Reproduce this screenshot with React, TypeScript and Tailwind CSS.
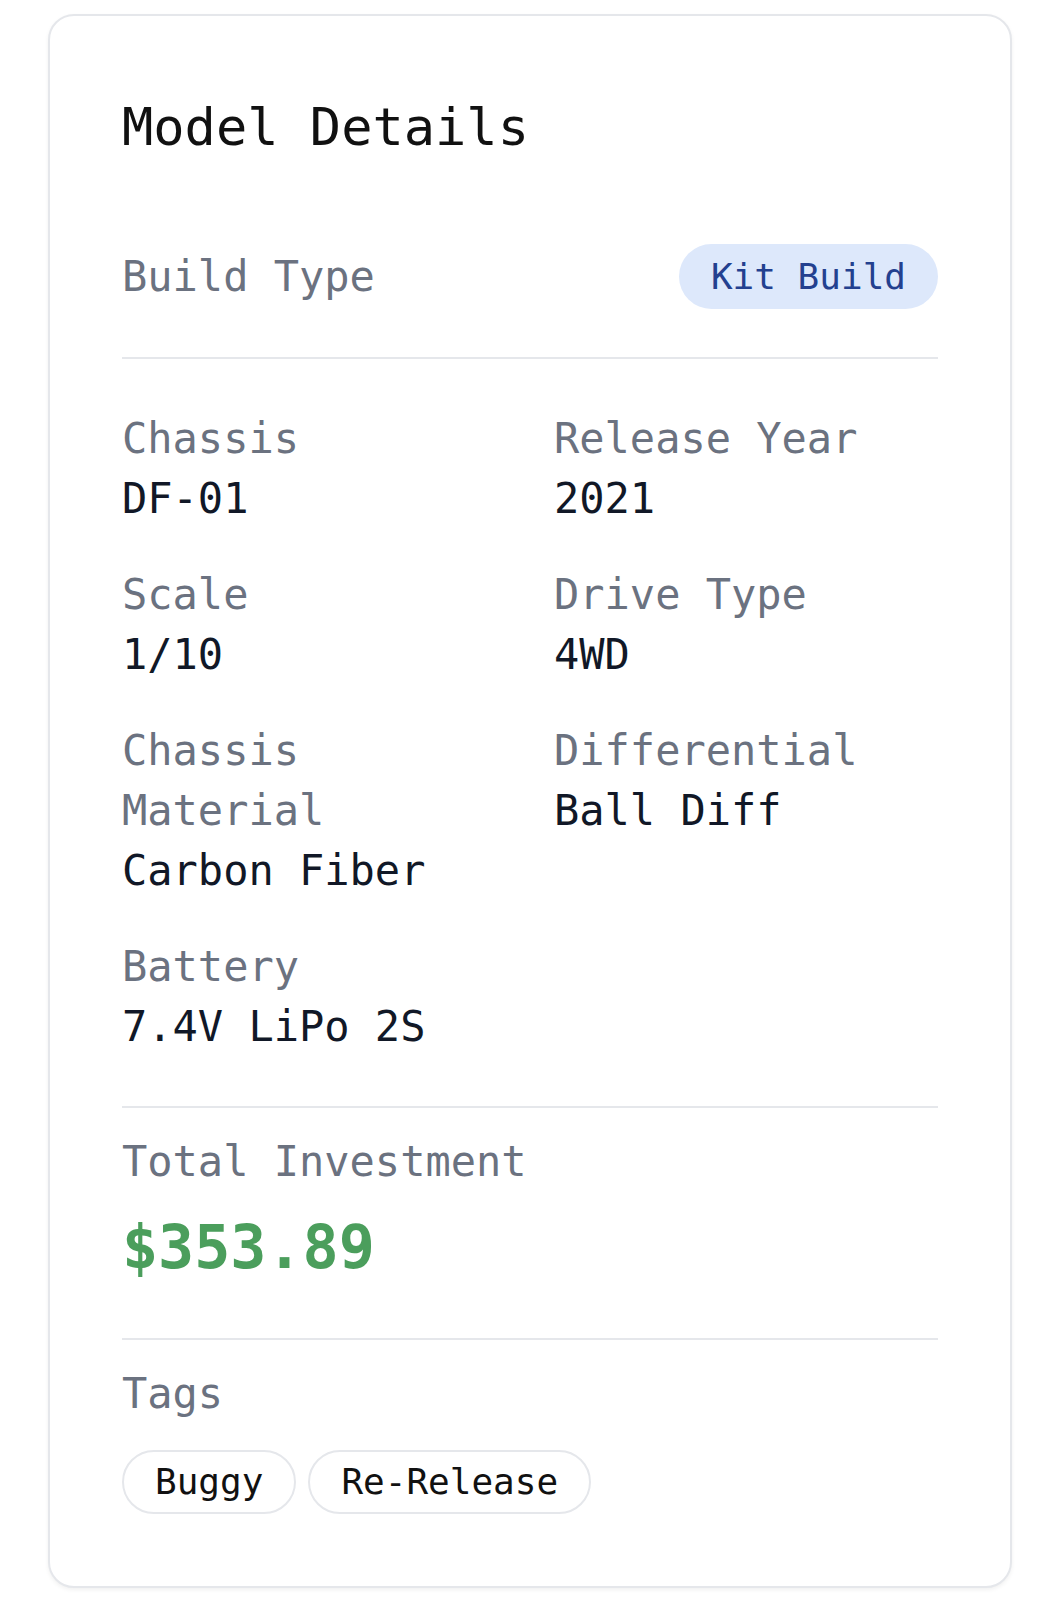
import React from "react";

type Spec = { label: string; value: string };

const specs: Spec[] = [
	{ label: "Chassis", value: "DF-01" },
	{ label: "Release Year", value: "2021" },
	{ label: "Scale", value: "1/10" },
	{ label: "Drive Type", value: "4WD" },
	{ label: "Chassis Material", value: "Carbon Fiber" },
	{ label: "Differential", value: "Ball Diff" },
	{ label: "Battery", value: "7.4V LiPo 2S" },
];

const tags = ["Buggy", "Re-Release"];

export default function App() {
	return (
		<div className="min-h-[1608px] bg-white px-12 pt-[14px] font-['DejaVu_Sans_Mono',monospace]">
			<section className="rounded-[26px] border-2 border-[#e5e7eb] bg-white p-[72px] shadow-[0_2px_4px_rgba(0,0,0,0.06)]">
				<h2 className="mb-[78px] text-[52px] leading-[78px] font-normal text-[#111111]">
					Model Details
				</h2>

				<div className="flex items-center justify-between border-b-2 border-[#e5e7eb] pb-[48px]">
					<span className="text-[42px] leading-[60px] text-[#6b7280]">Build Type</span>
					<span className="rounded-full bg-[#dde8fb] px-8 py-[6px] text-[36px] leading-[53px] text-[#23408f]">
						Kit Build
					</span>
				</div>

				<dl className="grid grid-cols-2 gap-x-12 gap-y-[36px] border-b-2 border-[#e5e7eb] pt-[50px] pb-[49px]">
					{specs.map((s) => (
						<div key={s.label}>
							<dt className="text-[42px] leading-[60px] text-[#6b7280]">{s.label}</dt>
							<dd className="text-[42px] leading-[60px] text-[#111827]">{s.value}</dd>
						</div>
					))}
				</dl>

				<div className="border-b-2 border-[#e5e7eb] pt-6 pb-[51px]">
					<p className="text-[42px] leading-[60px] text-[#6b7280]">Total Investment</p>
					<p className="mt-[15px] text-[60px] leading-[80px] font-bold text-[#4b9e5c]">$353.89</p>
				</div>

				<div className="pt-6">
					<p className="text-[42px] leading-[60px] text-[#6b7280]">Tags</p>
					<div className="mt-[26px] flex flex-wrap gap-3">
						{tags.map((t) => (
							<span
								key={t}
								className="rounded-full border-2 border-[#e5e7eb] px-[31px] text-[36px] leading-[60px] text-[#111111]"
							>
								{t}
							</span>
						))}
					</div>
				</div>
			</section>
		</div>
	);
}
